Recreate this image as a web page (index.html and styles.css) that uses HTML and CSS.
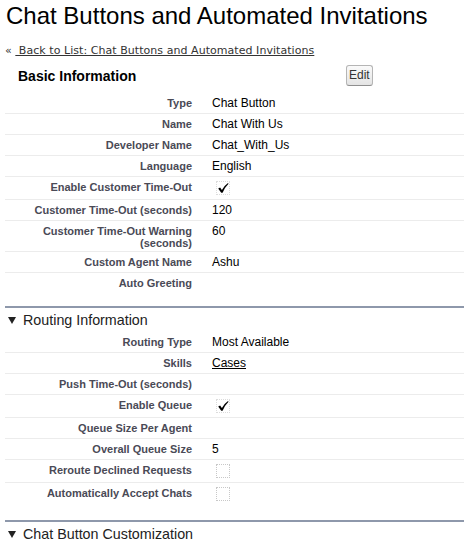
FILE: index.html
```html
<!DOCTYPE html>
<html lang="en">
<head>
    <meta charset="UTF-8">
    <meta name="viewport" content="width=device-width, initial-scale=1.0">
    <title>Chat Buttons and Automated Invitations</title>
    <link rel="stylesheet" href="styles.css">
</head>
<body>
    <h1 class="page-title">Chat Buttons and Automated Invitations</h1>
    <div class="breadcrumb">&laquo; <a href="#">&nbsp;Back to List: Chat Buttons and Automated Invitations</a></div>

    <div class="block">
        <div class="block-header">
            <h2>Basic Information</h2>
            <button class="btn">Edit</button>
        </div>
        <table class="detail-list">
            <colgroup><col class="label-col"><col></colgroup>
            <tr><td class="label">Type</td><td class="value">Chat Button</td></tr>
            <tr><td class="label">Name</td><td class="value">Chat With Us</td></tr>
            <tr><td class="label">Developer Name</td><td class="value">Chat_With_Us</td></tr>
            <tr><td class="label">Language</td><td class="value">English</td></tr>
            <tr><td class="label">Enable Customer Time-Out</td><td class="value"><span class="checkbox checked"><svg viewBox="0 0 12 12" width="12" height="12"><path d="M1.2 6.6 L3.1 5.4 L4.9 7.9 Q7.2 3.6 11 0.9 L11.5 1.7 Q8 5 5.6 10.8 L4.2 10.8 Z" fill="#000"/></svg></span></td></tr>
            <tr><td class="label">Customer Time-Out (seconds)</td><td class="value">120</td></tr>
            <tr class="tall"><td class="label">Customer Time-Out Warning (seconds)</td><td class="value">60</td></tr>
            <tr><td class="label">Custom Agent Name</td><td class="value">Ashu</td></tr>
            <tr class="last"><td class="label">Auto Greeting</td><td class="value"></td></tr>
        </table>
    </div>

    <div class="section">
        <h3 class="section-title"><svg viewBox="0 0 8 7" width="8" height="7"><path d="M0 0 H8 L4 7 Z" fill="#222"/></svg>Routing Information</h3>
        <table class="detail-list">
            <colgroup><col class="label-col"><col></colgroup>
            <tr><td class="label">Routing Type</td><td class="value">Most Available</td></tr>
            <tr><td class="label">Skills</td><td class="value"><a href="#">Cases</a></td></tr>
            <tr><td class="label">Push Time-Out (seconds)</td><td class="value"></td></tr>
            <tr><td class="label">Enable Queue</td><td class="value"><span class="checkbox checked"><svg viewBox="0 0 12 12" width="12" height="12"><path d="M1.2 6.6 L3.1 5.4 L4.9 7.9 Q7.2 3.6 11 0.9 L11.5 1.7 Q8 5 5.6 10.8 L4.2 10.8 Z" fill="#000"/></svg></span></td></tr>
            <tr><td class="label">Queue Size Per Agent</td><td class="value"></td></tr>
            <tr><td class="label">Overall Queue Size</td><td class="value">5</td></tr>
            <tr><td class="label">Reroute Declined Requests</td><td class="value"><span class="checkbox"></span></td></tr>
            <tr class="last"><td class="label">Automatically Accept Chats</td><td class="value"><span class="checkbox"></span></td></tr>
        </table>
    </div>

    <div class="section">
        <h3 class="section-title"><svg viewBox="0 0 8 7" width="8" height="7"><path d="M0 0 H8 L4 7 Z" fill="#222"/></svg>Chat Button Customization</h3>
    </div>
</body>
</html>
```

FILE: styles.css
```css
body {
    margin: 0;
    font-family: Arial, "Liberation Sans", sans-serif;
    color: #000;
    background-color: #fff;
    overflow: hidden;
}
.page-title {
    margin: 2px 0 0;
    padding-left: 6px;
    font-size: 24px;
    line-height: 28px;
    font-weight: normal;
    color: #000;
}
.breadcrumb {
    margin-top: 14px;
    padding-left: 5px;
    font-family: Verdana, "DejaVu Sans", sans-serif;
    font-size: 11px;
    line-height: 14px;
    letter-spacing: 0.05px;
    color: #333;
}
.breadcrumb a {
    color: #333;
    text-decoration: underline;
}
.block-header {
    display: flex;
    align-items: center;
    padding: 7px 0 7px 18px;
}
.block-header h2 {
    width: 328px;
    margin: 0;
    font-size: 14px;
    font-weight: bold;
    color: #000;
}
.btn {
    font-family: Arial, "Liberation Sans", sans-serif;
    font-size: 12px;
    line-height: 19px;
    padding: 0 2px;
    color: #333;
    background: linear-gradient(#fafafa, #e4e4e4);
    border: 1px solid #b5b5b5;
    border-bottom-color: #8f8f8f;
    border-radius: 3px;
}
.detail-list {
    margin-left: 5px;
    width: calc(100% - 5px);
    border-collapse: collapse;
    table-layout: fixed;
}
.label-col {
    width: 197px;
}
.detail-list td {
    padding: 4px 0 4px;
    line-height: 12px;
    vertical-align: top;
    border-bottom: 1px solid #ececec;
}
.detail-list tr.last td {
    border-bottom: none;
}
.detail-list tr.tall td {
    padding-bottom: 2px;
}
.detail-list .label {
    padding-right: 10px;
    text-align: right;
    font-size: 11px;
    font-weight: bold;
    color: #4a4a56;
}
.detail-list .value {
    padding-left: 10px;
    font-size: 12px;
    color: #000;
}
.detail-list .value a {
    color: #000;
    text-decoration: underline;
}
.checkbox {
    display: block;
    width: 12px;
    height: 12px;
    margin-left: 4px;
    border: 1px dotted #c8c8c8;
}
.checkbox.checked {
    border-color: #dcdcdc;
}
.checkbox svg {
    display: block;
}
.section {
    margin-top: 13px;
    margin-left: 5px;
    border-top: 2px solid #8e98ab;
}
.section + .section {
    margin-top: 15px;
}
.section .detail-list {
    margin-left: 0;
    width: 100%;
}
.section-title {
    display: flex;
    align-items: center;
    height: 24px;
    margin: 0;
    padding-left: 3px;
    font-size: 14.3px;
    font-weight: normal;
    color: #222;
}
.section-title svg {
    margin-right: 7px;
}
```
